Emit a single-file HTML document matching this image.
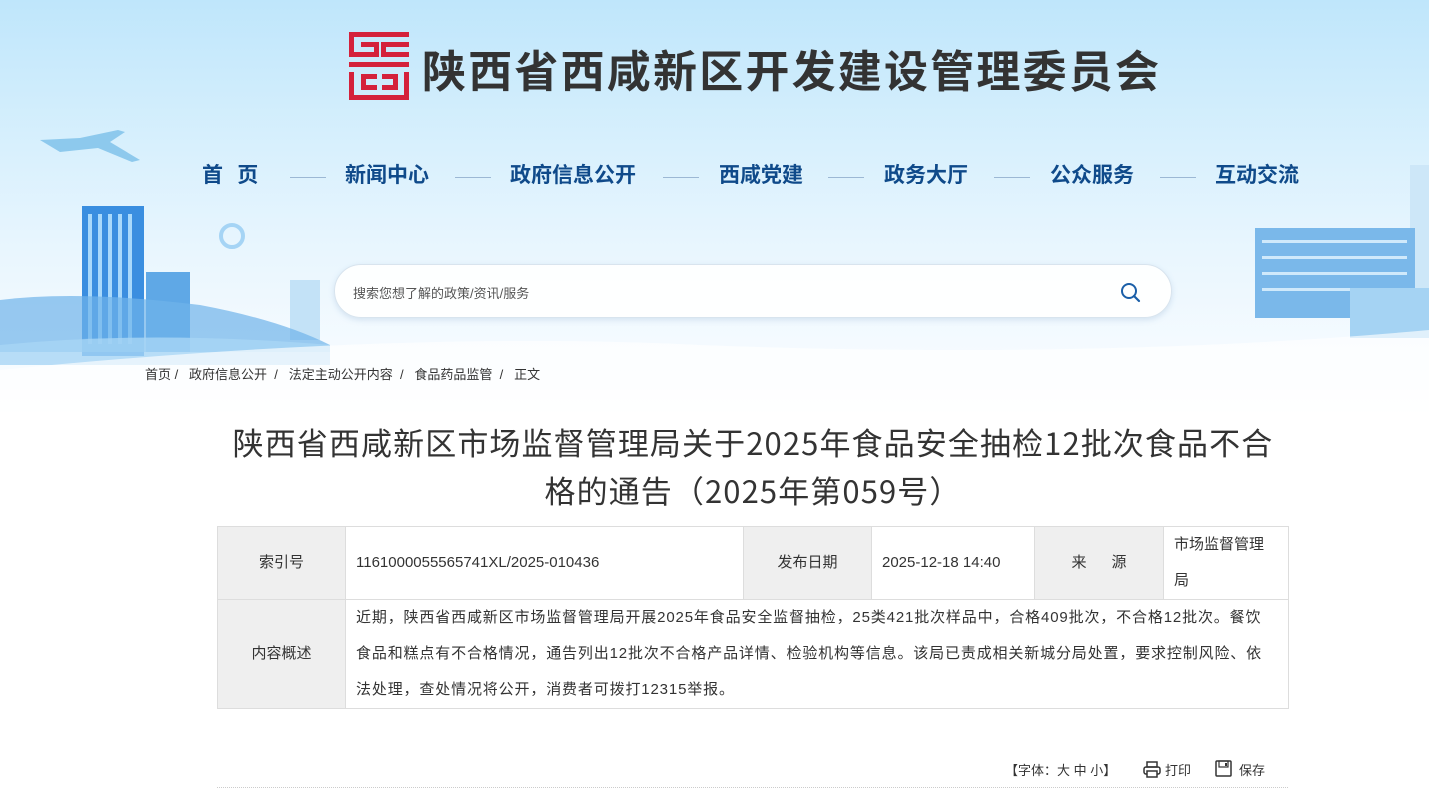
<!DOCTYPE html>
<html><head><meta charset="utf-8"><style>
*{margin:0;padding:0;box-sizing:border-box}
body{width:1429px;height:797px;overflow:hidden;background:#fff;font-family:"Liberation Sans","Noto Sans CJK SC",sans-serif;position:relative}
.hdr{position:absolute;left:0;top:0;width:1429px;height:422px;background:linear-gradient(180deg,#bfe6fb 0%,#d8f0fd 35%,#e9f6fe 60%,#f6fbff 85%,#fff 100%);overflow:hidden}
.a{position:absolute}
.title{left:422px;top:38px;font-size:44px;font-weight:bold;color:#333;letter-spacing:2.2px;font-family:"Noto Sans CJK SC",sans-serif;line-height:60px}
.nav{top:158px;font-size:21px;font-weight:bold;color:#0f4a8a;font-family:"Noto Sans CJK SC",sans-serif;line-height:32px}
.ln{top:177px;height:1px;width:36px;background:#9cb8d4}
.search{left:334px;top:264px;width:838px;height:54px;border-radius:27px;background:rgba(255,255,255,.9);border:1px solid #d8e4ee;box-shadow:0 2px 6px rgba(120,160,200,.25)}
.bc{top:364px;left:145px;font-size:13px;color:#333}
h1{position:absolute;left:200px;width:1106px;top:418px;text-align:center;font-size:31px;font-weight:normal;color:#333;line-height:48px;font-family:"Noto Sans CJK SC",sans-serif;letter-spacing:1.1px}
table{position:absolute;left:217px;top:526px;width:1072px;border-collapse:collapse;font-size:15px;color:#333}
td{border:1px solid #ddd;padding:0 10px;line-height:36px}
td.l{background:#efefef;text-align:center}
</style></head><body>
<div class="hdr">
<svg class="a" style="left:0;top:0" width="1429" height="422">
<path d="M40 140 L80 138 L118 130 L125 132 L110 142 L140 160 L132 162 L98 148 L60 152 Z" fill="#7bbfe8" opacity=".8"/>
<rect x="82" y="206" width="62" height="150" fill="#3a8ee0"/>
<g fill="#a9d9fb"><rect x="88" y="214" width="4" height="130"/><rect x="98" y="214" width="4" height="130"/><rect x="108" y="214" width="4" height="130"/><rect x="118" y="214" width="4" height="130"/><rect x="128" y="214" width="4" height="130"/></g>
<rect x="146" y="272" width="44" height="80" fill="#5fa8e6"/>
<circle cx="232" cy="236" r="11" fill="none" stroke="#a5d4f5" stroke-width="4"/>
<rect x="290" y="280" width="30" height="60" fill="#c3e2f7"/>
<path d="M0 300 Q80 290 200 305 Q280 320 330 345 L330 352 L0 352 Z" fill="#6fb4ea" opacity=".7"/>
<path d="M0 345 Q150 330 330 345 L330 365 L0 365 Z" fill="#a7d6f5" opacity=".8"/>
<rect x="1410" y="165" width="19" height="150" fill="#cde7f8"/>
<rect x="1255" y="228" width="160" height="90" fill="#7ab8ea"/>
<g fill="#cfe9fb"><rect x="1262" y="240" width="145" height="3"/><rect x="1262" y="256" width="145" height="3"/><rect x="1262" y="272" width="145" height="3"/><rect x="1262" y="288" width="145" height="3"/></g>
<rect x="1350" y="288" width="79" height="50" fill="#a5d3f3"/>
<path d="M0 370 Q400 330 700 345 Q1100 360 1429 330 L1429 422 L0 422 Z" fill="#fff" opacity=".65"/>
</svg>
<svg class="a" style="left:349px;top:32px" width="60" height="68" viewBox="0 0 60 68" fill="#d4213b">
<rect x="0" y="0" width="60" height="5"/><rect x="0" y="0" width="5" height="25"/><rect x="0" y="20" width="30" height="5"/><rect x="25" y="10" width="5" height="15"/><rect x="12" y="10" width="18" height="5"/>
<rect x="32" y="10" width="28" height="5"/><rect x="32" y="10" width="5" height="15"/><rect x="32" y="20" width="28" height="5"/>
<rect x="0" y="30" width="60" height="5"/>
<rect x="0" y="40" width="5" height="28"/><rect x="0" y="63" width="60" height="5"/><rect x="55" y="40" width="5" height="28"/>
<rect x="12" y="42" width="16" height="5"/><rect x="12" y="42" width="5" height="16"/><rect x="12" y="53" width="16" height="5"/>
<rect x="33" y="42" width="16" height="5"/><rect x="44" y="42" width="5" height="16"/><rect x="33" y="53" width="16" height="5"/>
</svg>
<div class="a title">陕西省西咸新区开发建设管理委员会</div>
<div class="a nav" style="left:202px">首&nbsp;&nbsp;&nbsp;页</div>
<div class="a ln" style="left:290px"></div>
<div class="a nav" style="left:345px">新闻中心</div>
<div class="a ln" style="left:455px"></div>
<div class="a nav" style="left:510px">政府信息公开</div>
<div class="a ln" style="left:663px"></div>
<div class="a nav" style="left:719px">西咸党建</div>
<div class="a ln" style="left:828px"></div>
<div class="a nav" style="left:884px">政务大厅</div>
<div class="a ln" style="left:994px"></div>
<div class="a nav" style="left:1050px">公众服务</div>
<div class="a ln" style="left:1160px"></div>
<div class="a nav" style="left:1215px">互动交流</div>
<div class="a search"><span class="a" style="left:18px;top:18px;font-size:13px;color:#555">搜索您想了解的政策/资讯/服务</span>
<svg class="a" style="left:785px;top:17px" width="22" height="22" viewBox="0 0 22 22"><circle cx="9" cy="9" r="7" fill="none" stroke="#1b5fa8" stroke-width="2"/><path d="M14 14 L19 19" stroke="#1b5fa8" stroke-width="2.2" stroke-linecap="round"/></svg></div>
<div class="a bc">首页 /&nbsp;&nbsp; 政府信息公开 &nbsp;/&nbsp;&nbsp; 法定主动公开内容 &nbsp;/&nbsp;&nbsp; 食品药品监管 &nbsp;/&nbsp;&nbsp; 正文</div>
</div>
<h1>陕西省西咸新区市场监督管理局关于2025年食品安全抽检12批次食品不合<br>格的通告（2025年第059号）</h1>
<table>
<tr style="height:73px"><td class="l" style="width:128px">索引号</td><td style="width:398px">1161000055565741XL/2025-010436</td><td class="l" style="width:128px">发布日期</td><td style="width:163px">2025-12-18 14:40</td><td class="l" style="width:129px">来&nbsp;&nbsp;&nbsp;&nbsp;&nbsp;&nbsp;源</td><td style="line-height:36px">市场监督管理局</td></tr>
<tr style="height:109px"><td class="l">内容概述</td><td colspan="5" style="white-space:nowrap;letter-spacing:.85px">近期，陕西省西咸新区市场监督管理局开展2025年食品安全监督抽检，25类421批次样品中，合格409批次，不合格12批次。餐饮<br>食品和糕点有不合格情况，通告列出12批次不合格产品详情、检验机构等信息。该局已责成相关新城分局处置，要求控制风险、依<br>法处理，查处情况将公开，消费者可拨打12315举报。</td></tr>
</table>
<div class="a" style="left:1005px;top:760px;font-size:13px;color:#333">【字体：大 中 小】</div>
<svg class="a" style="left:1143px;top:761px" width="18" height="17" viewBox="0 0 18 17"><rect x="4" y="1" width="10" height="5" fill="none" stroke="#333" stroke-width="1.5"/><rect x="1" y="6" width="16" height="7" rx="2" fill="none" stroke="#333" stroke-width="1.5"/><rect x="4" y="10" width="10" height="6" fill="#fff" stroke="#333" stroke-width="1.5"/></svg>
<div class="a" style="left:1165px;top:760px;font-size:13px;color:#333">打印</div>
<svg class="a" style="left:1215px;top:760px" width="17" height="17" viewBox="0 0 17 17"><rect x="1" y="1" width="15" height="15" rx="1" fill="none" stroke="#333" stroke-width="1.5"/><rect x="4" y="1" width="9" height="6" fill="none" stroke="#333" stroke-width="1.2"/><rect x="10" y="3" width="2" height="3" fill="#333"/></svg>
<div class="a" style="left:1239px;top:760px;font-size:13px;color:#333">保存</div>
<div class="a" style="left:217px;top:787px;width:1071px;border-top:1px dotted #ccc"></div>
</body></html>
